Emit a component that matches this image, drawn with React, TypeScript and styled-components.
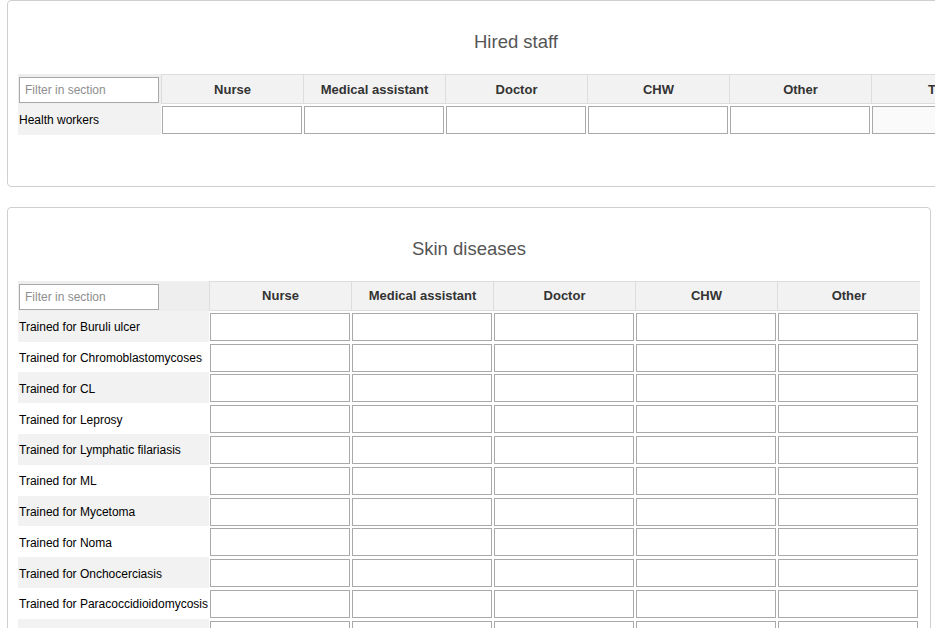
import React from "react";
import styled, { createGlobalStyle } from "styled-components";

const GlobalStyle = createGlobalStyle`
  html, body {
    margin: 0;
    padding: 0;
    background: #fff;
  }
  body {
    font-family: "Liberation Sans", Arial, sans-serif;
  }
`;

const Page = styled.div`
  width: 935px;
  height: 628px;
  overflow: hidden;
  padding-left: 7px;
  box-sizing: border-box;
  display: flex;
  flex-direction: column;
  align-items: flex-start;
  gap: 20px;
`;

const Panel = styled.section`
  width: max-content;
  border: 1px solid #cfcfcf;
  border-radius: 4px;
  padding: 10px 10px 51px 10px;
  flex-shrink: 0;
`;

const Title = styled.h2`
  margin: 0;
  padding: 19px 0 20px;
  line-height: 24px;
  font-size: 18.5px;
  font-weight: normal;
  color: #555;
  text-align: center;
`;

const Grid = styled.div<{ $label: number; $cols: number }>`
  display: grid;
  grid-template-columns: ${(p) => `${p.$label}px repeat(${p.$cols - 1}, 142px) 143px`};
  grid-template-rows: 30px;
  grid-auto-rows: 30.8px;
`;

const FilterCell = styled.div`
  background: #eeeeee;
  padding: 3px 0 0 1px;
`;

const FilterInput = styled.input`
  box-sizing: border-box;
  width: 140px;
  height: 26px;
  margin: 0;
  border: 1px solid #a9a9a9;
  padding: 0 5px;
  font-family: "Liberation Sans", Arial, sans-serif;
  font-size: 12px;
  color: #333;
  outline: none;
  &::placeholder {
    color: #8e8e8e;
  }
`;

const HeadCell = styled.div`
  box-sizing: border-box;
  background: #f2f2f2;
  border: 1px solid #dddddd;
  border-right: none;
  display: flex;
  align-items: center;
  justify-content: center;
  font-size: 13px;
  font-weight: bold;
  color: #333;
  white-space: nowrap;
  &:last-child {
    border-right: 1px solid #dddddd;
  }
`;

const LabelCell = styled.div<{ $striped: boolean }>`
  box-sizing: border-box;
  background: ${(p) => (p.$striped ? "#f2f2f2" : "#fff")};
  display: flex;
  align-items: center;
  padding: 2px 0 0 1px;
  font-size: 12px;
  color: #000;
  white-space: nowrap;
`;

const InputCell = styled.div`
  padding: 2px 1px 1px 1px;
`;

const ValueInput = styled.input`
  box-sizing: border-box;
  display: block;
  width: 140px;
  height: 28px;
  margin: 0;
  border: 1px solid #a9a9a9;
  background: #fff;
  outline: none;
  &:disabled {
    background: #fafafa;
  }
`;

type SectionProps = {
  title: string;
  labelWidth: number;
  columns: string[];
  rows: string[];
  disabledColumn?: string;
};

const Section = ({ title, labelWidth, columns, rows, disabledColumn }: SectionProps) => (
  <Panel>
    <Title>{title}</Title>
    <Grid $label={labelWidth} $cols={columns.length}>
      <FilterCell>
        <FilterInput placeholder="Filter in section" />
      </FilterCell>
      {columns.map((c) => (
        <HeadCell key={c}>{c}</HeadCell>
      ))}
      {rows.map((r, i) => (
        <React.Fragment key={r}>
          <LabelCell $striped={i % 2 === 0}>{r}</LabelCell>
          {columns.map((c) => (
            <InputCell key={c}>
              <ValueInput disabled={c === disabledColumn} />
            </InputCell>
          ))}
        </React.Fragment>
      ))}
    </Grid>
  </Panel>
);

const skin = [
  "Buruli ulcer",
  "Chromoblastomycoses",
  "CL",
  "Leprosy",
  "Lymphatic filariasis",
  "ML",
  "Mycetoma",
  "Noma",
  "Onchocerciasis",
  "Paracoccidioidomycosis",
  "Scabies",
  "Sporotrichosis",
  "Yaws",
].map((d) => `Trained for ${d}`);

export default function App() {
  return (
    <>
      <GlobalStyle />
      <Page>
        <Section
          title="Hired staff"
          labelWidth={143}
          columns={["Nurse", "Medical assistant", "Doctor", "CHW", "Other", "Total"]}
          rows={["Health workers"]}
          disabledColumn="Total"
        />
        <Section
          title="Skin diseases"
          labelWidth={191}
          columns={["Nurse", "Medical assistant", "Doctor", "CHW", "Other"]}
          rows={skin}
        />
      </Page>
    </>
  );
}
